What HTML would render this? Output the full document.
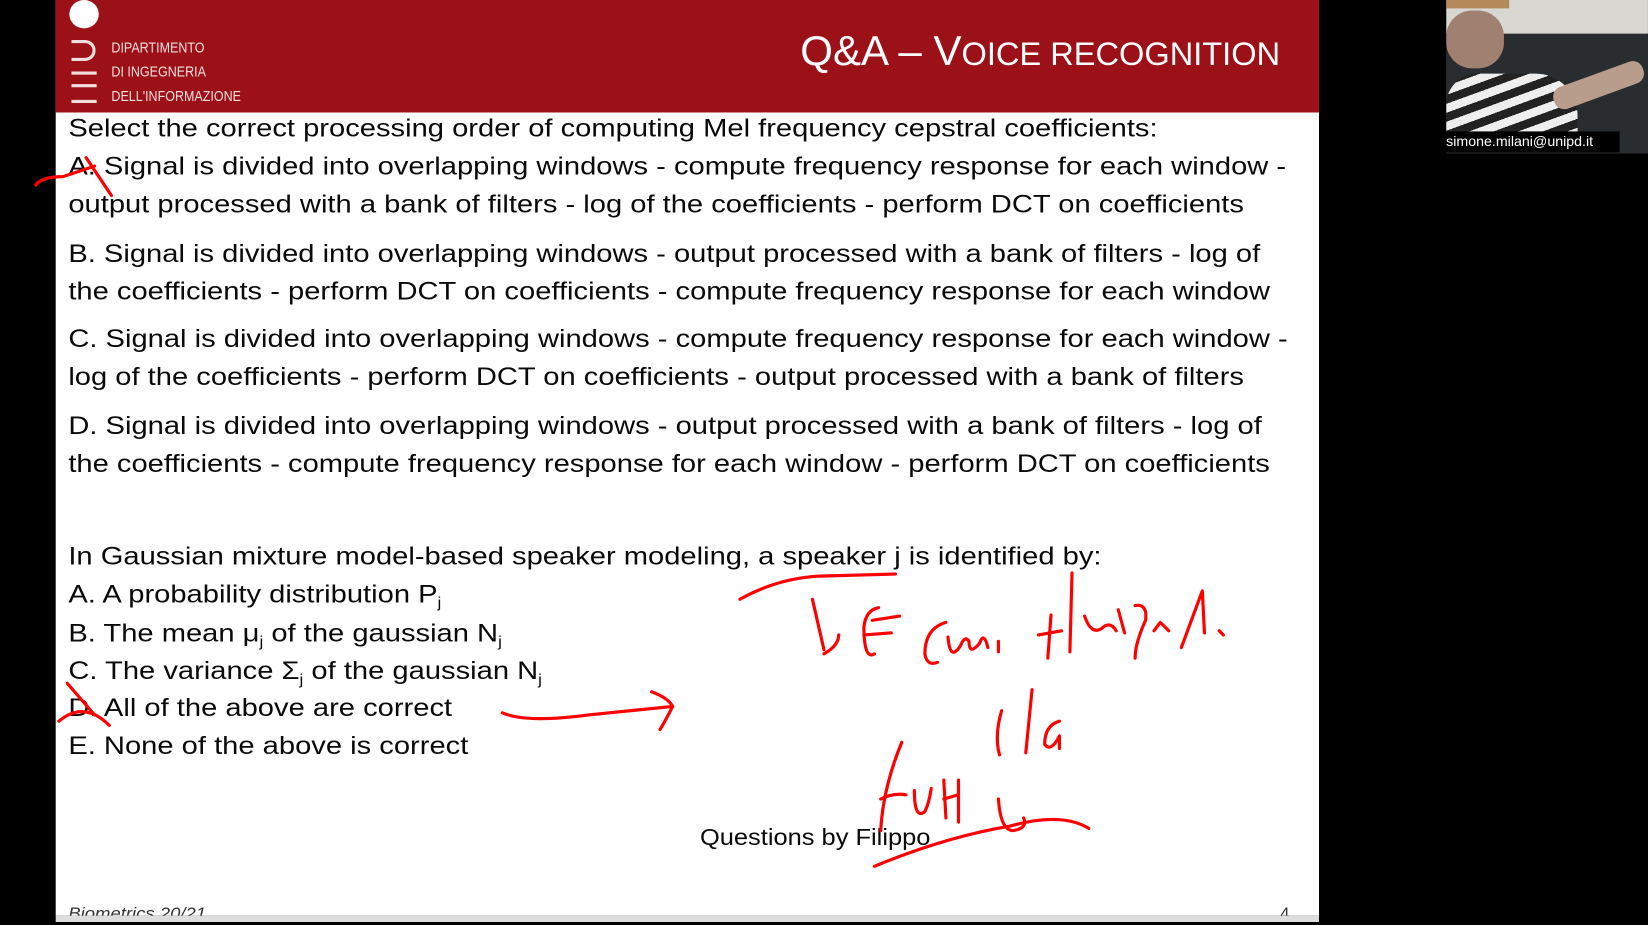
<!DOCTYPE html>
<html><head><meta charset="utf-8"><style>
html,body{margin:0;padding:0;background:#000;width:1648px;height:922px;overflow:hidden}
#w{position:absolute;left:0;top:0;width:1568px;height:877px;transform:scale(1.0510,1.0513);transform-origin:0 0;font-family:"Liberation Sans",sans-serif}
.slide{position:absolute;left:53px;top:0;width:1202px;height:871px;background:#fff}
.hdr{position:absolute;left:53px;top:0;width:1202px;height:107px;background:#9c1117}
.t{position:absolute;left:65px;font-size:24px;color:#0a0a0a;white-space:nowrap;transform-origin:0 50%;line-height:30px;transform:scaleX(1.155)}
.logo{position:absolute;color:#f3dede;font-size:14px;left:106px;transform:scaleX(.85);transform-origin:0 0}
.bar{position:absolute;left:68px;width:24px;height:3px;background:#f3dede}
sub{font-size:14px;vertical-align:-5px;line-height:0}
</style></head><body><div id="w">
<div class="slide"></div>
<div class="hdr"></div>
<div style="position:absolute;left:66px;top:0;width:28px;height:27px;border-radius:50%;background:#fff"></div>
<div style="position:absolute;left:68px;top:38px;width:20px;height:14px;border:3px solid #f3dede;border-left:none;border-radius:0 10px 10px 0"></div>
<div class="bar" style="top:68px"></div><div class="bar" style="top:80px"></div><div class="bar" style="top:95px"></div>
<div class="logo" style="top:37px">DIPARTIMENTO</div>
<div class="logo" style="top:60px">DI INGEGNERIA</div>
<div class="logo" style="top:83px">DELL'INFORMAZIONE</div>
<div style="position:absolute;right:350px;top:27px;color:#fff;font-size:40px;white-space:nowrap">Q&amp;A – V<span style="font-size:31px">OICE RECOGNITION</span></div>

<div class="t" style="top:108px">Select the correct processing order of computing Mel frequency cepstral coefficients:</div>
<div class="t" style="top:144px">A. Signal is divided into overlapping windows - compute frequency response for each window -</div>
<div class="t" style="top:180px">output processed with a bank of filters - log of the coefficients - perform DCT on coefficients</div>
<div class="t" style="top:227px">B. Signal is divided into overlapping windows - output processed with a bank of filters - log of</div>
<div class="t" style="top:263px">the coefficients - perform DCT on coefficients - compute frequency response for each window</div>
<div class="t" style="top:308px">C. Signal is divided into overlapping windows - compute frequency response for each window -</div>
<div class="t" style="top:344px">log of the coefficients - perform DCT on coefficients - output processed with a bank of filters</div>
<div class="t" style="top:391px">D. Signal is divided into overlapping windows - output processed with a bank of filters - log of</div>
<div class="t" style="top:427px">the coefficients - compute frequency response for each window - perform DCT on coefficients</div>
<div class="t" style="top:515px">In Gaussian mixture model-based speaker modeling, a speaker j is identified by:</div>
<div class="t" style="top:551px">A. A probability distribution P<sub>j</sub></div>
<div class="t" style="top:588px">B. The mean μ<sub>j</sub> of the gaussian N<sub>j</sub></div>
<div class="t" style="top:624px">C. The variance Σ<sub>j</sub> of the gaussian N<sub>j</sub></div>
<div class="t" style="top:659px">D. All of the above are correct</div>
<div class="t" style="top:695px">E. None of the above is correct</div>
<div class="t" style="top:782px;left:666px;font-size:22px;transform:scaleX(1.1)">Questions by Filippo</div>
<div class="t" style="top:860px;font-size:16px;font-style:italic;line-height:20px;color:#333;transform:scaleX(1.1)">Biometrics 20/21</div>
<div class="t" style="top:860px;left:1218px;font-size:16px;line-height:20px;color:#333;transform:none">4</div>
<div style="position:absolute;left:53px;top:871px;width:1202px;height:6px;background:#ddd"></div>

<div style="position:absolute;left:1376px;top:0;width:192px;height:146px;background:#2a2d30;overflow:hidden">
 <div style="position:absolute;left:0;top:0;width:192px;height:32px;background:#d9d7d2"></div>
 <div style="position:absolute;left:0;top:0;width:60px;height:8px;background:#b58a5a"></div>
 <div style="position:absolute;left:0;top:10px;width:55px;height:55px;border-radius:45%;background:#a08070"></div>
 <div style="position:absolute;left:0;top:70px;width:125px;height:60px;border-radius:30px 40px 0 0;background:repeating-linear-gradient(-20deg,#eee 0 8px,#222 8px 16px)"></div>
 <div style="position:absolute;left:100px;top:70px;width:90px;height:22px;background:#b89c8c;transform:rotate(-20deg);border-radius:10px"></div>
 <div style="position:absolute;left:0;top:125px;width:165px;height:20px;background:#000;color:#fff;font-size:13.5px;line-height:20px">simone.milani@unipd.it</div>
</div>

<svg style="position:absolute;left:0;top:0" width="1568" height="877" viewBox="0 0 1568 877" fill="none" stroke="#f00" stroke-width="3" stroke-linecap="round" stroke-linejoin="round">
<path d="M34 176 Q40 168 60 168 L90 158"/><path d="M82 150 L106 186"/>
<path d="M64 650 L90 680"/><path d="M56 686 Q80 666 104 690"/>
<path d="M478 678 Q500 688 560 680 L640 672"/><path d="M620 658 Q636 664 640 672 Q634 684 628 694"/>
<path d="M704 570 Q740 550 780 548 L852 546"/>
<path d="M773 570 L784 618"/><path d="M784 622 Q798 614 798 604"/>
<path d="M830 590 L856 586"/><path d="M836 578 Q824 580 822 596 Q822 628 832 622"/><path d="M822 604 L848 602"/>
<path d="M900 592 Q880 598 880 622 Q882 634 892 630"/><path d="M902 606 Q904 630 914 614 Q918 604 922 610 Q922 624 932 612 Q936 600 940 616"/>
<path d="M950 610 L950 620"/>
<path d="M1000 585 L997 626"/><path d="M1020 545 L1018 620"/><path d="M988 604 L1010 600"/>
<path d="M1032 586 Q1038 604 1048 598 Q1056 590 1062 600"/><path d="M1064 580 L1070 602"/>
<path d="M1080 576 Q1092 574 1090 590 Q1080 612 1080 626"/><path d="M1098 600 L1104 592 L1112 600"/>
<path d="M1124 616 L1144 562 L1146 602"/><path d="M1160 600 L1164 604"/>
<path d="M953 676 Q946 700 951 718"/><path d="M982 656 L976 716"/><path d="M1008 686 Q994 690 994 708 Q1000 716 1008 700 L1008 712"/>
<path d="M858 706 Q840 750 838 790"/><path d="M838 760 Q850 754 862 756"/>
<path d="M870 752 Q870 780 880 772 Q884 764 886 750"/><path d="M898 742 L900 778"/><path d="M898 760 L912 756"/><path d="M912 742 L912 782"/>
<path d="M950 760 Q952 790 964 790 Q978 788 974 778"/>
<path d="M832 824 Q900 796 960 786 Q1010 772 1036 788"/>
</svg>
</div></body></html>
